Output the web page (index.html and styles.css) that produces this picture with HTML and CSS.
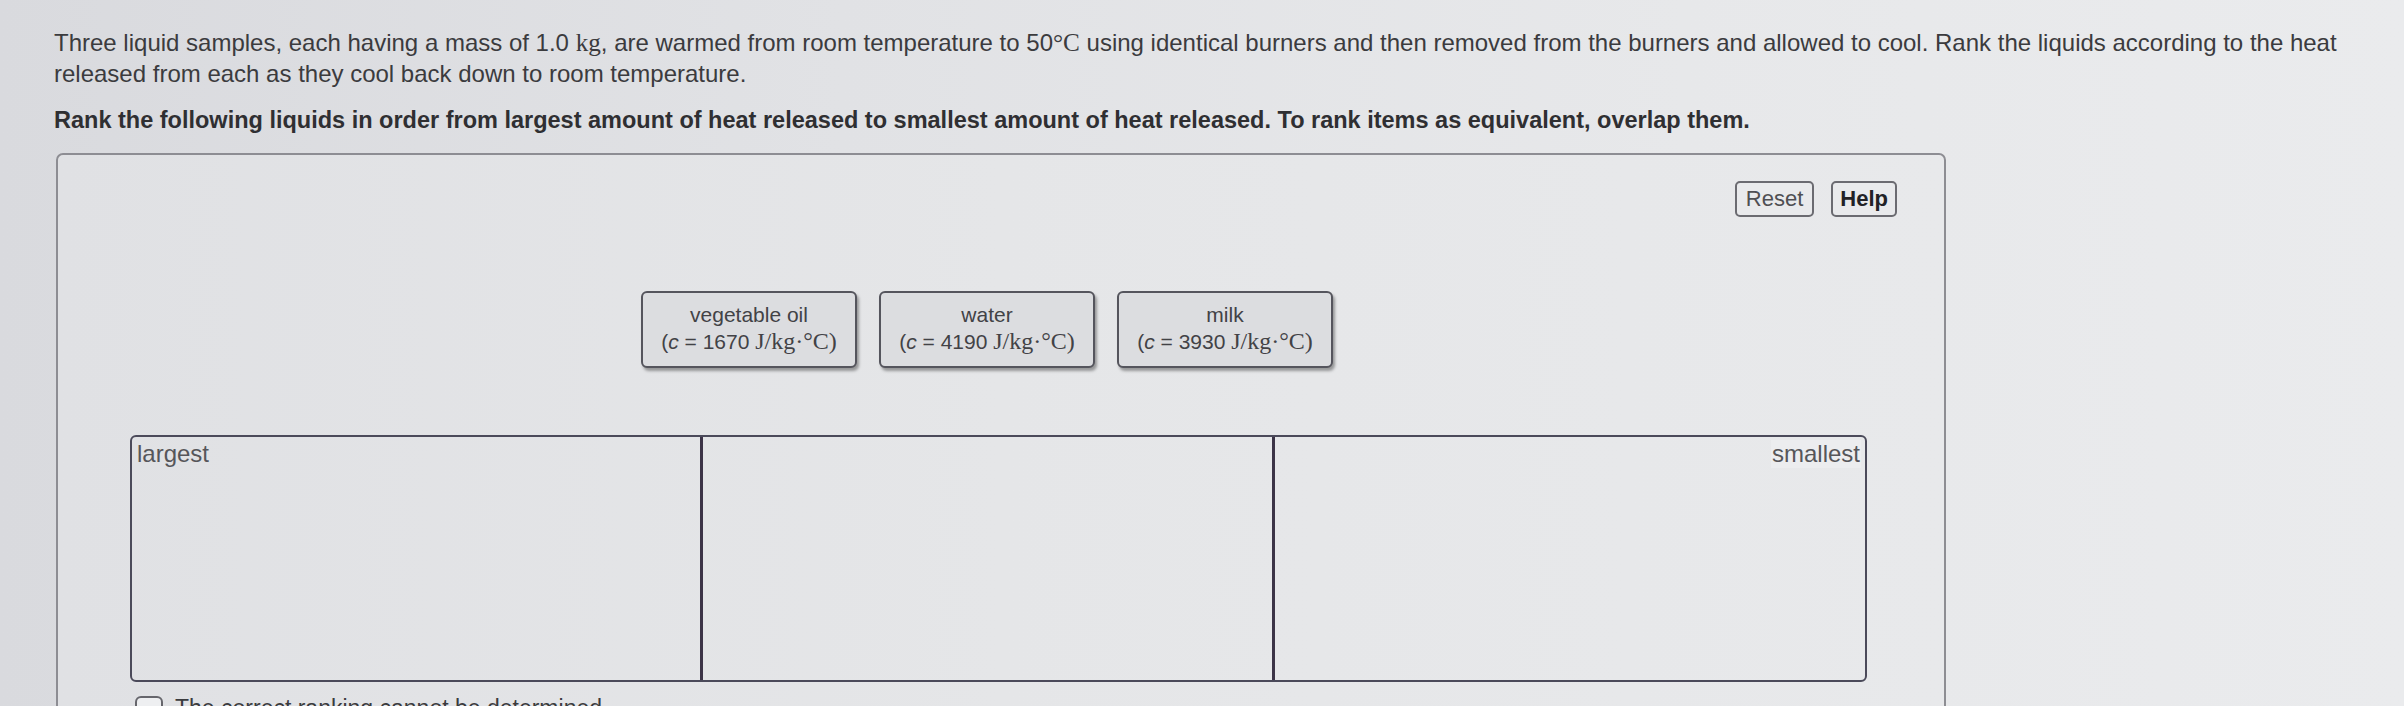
FILE: index.html
```html
<!DOCTYPE html>
<html lang="en">
<head>
<meta charset="utf-8">
<title>Rank the liquids</title>
<link rel="stylesheet" href="styles.css">
</head>
<body>
<div class="page">
  <p class="prompt"><span>Three liquid samples, each having a mass of 1.0 </span><span class="m">kg</span><span>, are warmed from room temperature to 50</span><span class="m">°C</span><span> using identical burners and then removed from the burners and allowed to cool. Rank the liquids according to the heat</span> <span>released from each as they cool back down to room temperature.</span></p>
  <p class="instr">Rank the following liquids in order from largest amount of heat released to smallest amount of heat released. To rank items as equivalent, overlap them.</p>
  <div class="panel">
    <div class="tools">
      <button class="btn">Reset</button>
      <button class="btn help">Help</button>
    </div>
    <div class="items">
      <div class="card">
        <div class="name">vegetable oil</div>
        <div class="val">(<i>c</i> = 1670 <span class="m">J/kg·°C)</span></div>
      </div>
      <div class="card">
        <div class="name">water</div>
        <div class="val">(<i>c</i> = 4190 <span class="m">J/kg·°C)</span></div>
      </div>
      <div class="card">
        <div class="name">milk</div>
        <div class="val">(<i>c</i> = 3930 <span class="m">J/kg·°C)</span></div>
      </div>
    </div>
    <div class="rank">
      <div class="col"><span class="lbl">largest</span></div>
      <div class="col mid"></div>
      <div class="col last"><span class="lbl">smallest</span></div>
    </div>
    <label class="opt"><span class="chk"></span><span>The correct ranking cannot be determined.</span></label>
  </div>
</div>
</body>
</html>
```
FILE: styles.css
```css
html, body {
  margin: 0;
  height: 706px;
  overflow: hidden;
}
body {
  background: linear-gradient(90deg, #d9dade 0%, #e1e2e5 35%, #e7e8ea 70%, #eaebed 100%);
  font-family: "Liberation Sans", Arial, sans-serif;
  color: #3b3b3e;
}
.page {
  padding: 27px 0 0 54px;
}
.prompt {
  margin: 0;
  width: 2310px;
  font-size: 24px;
  line-height: 31px;
}
.m {
  font-family: "Liberation Serif", "Times New Roman", serif;
  font-size: 1.05em;
}
.instr {
  margin: 16px 0 0;
  font-size: 23.5px;
  line-height: 31px;
  font-weight: bold;
  color: #2f2f32;
}
.panel {
  margin: 17px 0 0 2px;
  width: 1890px;
  height: 640px;
  box-sizing: border-box;
  border: 2px solid #8d8d93;
  border-radius: 7px;
  background: linear-gradient(90deg, #e0e1e4 0%, #e5e6e8 50%, #e8e9eb 100%);
  padding: 26px 47px 0 72px;
}
.tools {
  display: flex;
  justify-content: flex-end;
  gap: 17px;
}
.btn {
  height: 36px;
  padding: 0 9px;
  border: 2px solid #6b6b71;
  border-radius: 5px;
  background: #e9eaec;
  color: #4f4f53;
  font-family: "Liberation Sans", Arial, sans-serif;
  font-size: 22px;
}
.btn.help {
  padding: 0 7px;
  font-weight: bold;
  color: #222226;
}
.items {
  display: flex;
  gap: 22px;
  margin: 74px 0 0 511px;
}
.card {
  width: 216px;
  height: 77px;
  box-sizing: border-box;
  border: 2px solid #55555d;
  border-radius: 6px;
  background: #dcdde0;
  box-shadow: 2px 3px 3px rgba(0, 0, 0, 0.35);
  padding-top: 8px;
  text-align: center;
  font-size: 21px;
  line-height: 27px;
  color: #424246;
  white-space: nowrap;
}
.val .m {
  font-size: 24px;
}
.rank {
  margin-top: 67px;
  width: 1737px;
  height: 247px;
  box-sizing: border-box;
  border: 2px solid #4b4a5a;
  border-radius: 6px;
  display: grid;
  grid-template-columns: 568px 572px 1fr;
}
.col {
  padding: 3px 4px;
  font-size: 24px;
  line-height: 28px;
  color: #56565a;
}
.mid, .last {
  border-left: 3px solid #3c3447;
}
.last {
  text-align: right;
}
.lbl {
  display: inline-block;
  padding: 0 1px;
}
.last .lbl {
  background: #ecedef;
}
.opt {
  display: flex;
  align-items: flex-start;
  gap: 12px;
  margin: 12px 0 0 5px;
  font-size: 23px;
  line-height: 28px;
  color: #3b3b3e;
}
.chk {
  width: 24px;
  height: 24px;
  border: 2px solid #66666c;
  border-radius: 6px;
  background: #eeeff1;
  margin-top: 2px;
}
```
